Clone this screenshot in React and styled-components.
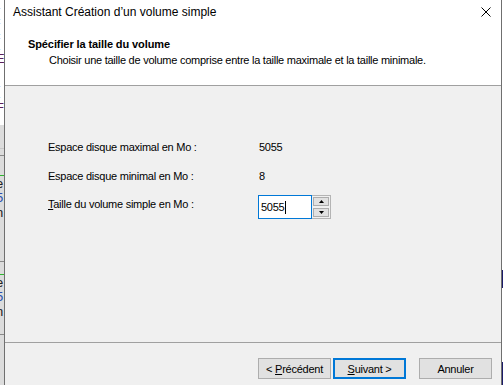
import React from "react";
import styled, { createGlobalStyle } from "styled-components";

const GlobalStyle = createGlobalStyle`
  html, body {
    margin: 0;
    padding: 0;
  }
  body {
    width: 503px;
    height: 385px;
    overflow: hidden;
    background: #ffffff;
    font-family: "Liberation Sans", Arial, sans-serif;
    font-size: 11px;
    letter-spacing: -0.25px;
    color: #000;
  }
`;

const Desktop = styled.div`
  display: flex;
  width: 503px;
  height: 385px;
`;

const BackStrip = styled.div`
  width: 4px;
  overflow: hidden;
  display: flex;
  flex-direction: column;
  background: linear-gradient(#ffffff 0 125px, #dcdcdc 125px);
`;

const BackLetter = styled.div`
  height: ${(p) => p.h}px;
  line-height: ${(p) => p.h}px;
  font-size: 13px;
  color: ${(p) => p.color || "#5a1f5a"};
  white-space: nowrap;
  margin-left: -4px;
`;

const BackRule = styled.div`
  height: 1px;
  margin-top: ${(p) => p.mt}px;
  background: ${(p) => p.color};
`;

const RightStrip = styled.div`
  width: 1px;
  background: linear-gradient(#ffffff 0 270px, #1c1c6a 270px 288px, #ffffff 288px 362px, #1c1c6a 362px);
`;

const Window = styled.div`
  flex: 1;
  display: flex;
  flex-direction: column;
  border-left: 1px solid #6f6f6f;
  border-right: 1px solid #6f6f6f;
  background: #f0f0f0;
`;

const TitleBar = styled.div`
  height: 30px;
  display: flex;
  align-items: center;
  justify-content: space-between;
  padding: 0 10px 0 8px;
  background: #ffffff;
`;

const TitleText = styled.div`
  font-size: 12px;
  letter-spacing: 0;
  margin-top: -6px;
`;

const CloseIcon = styled.svg`
  width: 10px;
  height: 10px;
  margin-top: -6px;
`;

const Header = styled.div`
  height: 56px;
  box-sizing: border-box;
  padding: 8px 0 0 23px;
  background: #ffffff;
  border-bottom: 1px solid #a0a0a0;
`;

const HeaderTitle = styled.div`
  font-weight: bold;
  letter-spacing: -0.1px;
  line-height: 13px;
`;

const HeaderSub = styled.div`
  line-height: 13px;
  margin: 3px 0 0 21px;
`;

const Body = styled.div`
  flex: 1;
  padding: 55px 0 0 43px;
`;

const Row = styled.div`
  display: flex;
  align-items: flex-start;
  margin-top: ${(p) => p.mt || 0}px;
`;

const Label = styled.div`
  width: 210px;
  line-height: 13px;
  padding-top: ${(p) => p.pt || 0}px;
`;

const Value = styled.div`
  line-height: 13px;
  padding-left: 1px;
`;

const Spin = styled.div`
  display: flex;
`;

const Field = styled.div`
  width: 50px;
  height: 22px;
  border: 1px solid #0078d7;
  background: #ffffff;
  display: flex;
  align-items: center;
  padding-left: 2px;
`;

const Caret = styled.span`
  display: inline-block;
  width: 1px;
  height: 13px;
  background: #000;
  margin-left: 1px;
`;

const SpinFrame = styled.div`
  width: 16px;
  height: 22px;
  border: 1px solid #b4b4b4;
  border-left: none;
  display: flex;
  flex-direction: column;
  justify-content: center;
  gap: 2px;
  padding: 0 1px;
`;

const SpinButton = styled.div`
  height: 7px;
  border: 1px solid #adadad;
  background: #e1e1e1;
  display: flex;
  align-items: center;
  justify-content: center;
`;

const Footer = styled.div`
  height: 43px;
  border-top: 1px solid #a0a0a0;
  display: flex;
  justify-content: flex-end;
  align-items: flex-start;
  padding: 15px 9px 0 0;
  box-sizing: border-box;
`;

const Button = styled.div`
  width: 73px;
  height: 21px;
  box-sizing: border-box;
  border: ${(p) => (p.primary ? "2px solid #0078d7" : "1px solid #adadad")};
  background: #e1e1e1;
  display: flex;
  align-items: center;
  justify-content: center;
  margin-left: ${(p) => p.ml || 0}px;
  u {
    text-decoration: underline;
  }
`;

function Arrow({ down }) {
  return (
    <svg width="5" height="3" viewBox="0 0 5 3">
      <path d={down ? "M0 0H5L2.5 3Z" : "M0 3H5L2.5 0Z"} fill="#000" />
    </svg>
  );
}

export default function App() {
  return (
    <>
      <GlobalStyle />
      <Desktop>
        <BackStrip>
          <BackLetter h={5} />
          <BackLetter h={15}>(</BackLetter>
          <BackLetter h={15}>(</BackLetter>
          <BackLetter h={15}>(</BackLetter>
          <BackLetter h={17}>E</BackLetter>
          <BackLetter h={16}>I</BackLetter>
          <BackLetter h={16}>(</BackLetter>
          <BackLetter h={18}>F</BackLetter>
          <BackRule mt={31} color="#c8c8c8" />
          <BackRule mt={6} color="#8a8a8a" />
          <BackRule mt={19} color="#2fb52f" />
          <BackLetter h={15} color="#222">e</BackLetter>
          <BackLetter h={14} color="#2b4fb0">5</BackLetter>
          <BackLetter h={16} color="#222">n</BackLetter>
          <BackRule mt={40} color="#8a8a8a" />
          <BackRule mt={12} color="#2fb52f" />
          <BackLetter h={15} color="#222">e</BackLetter>
          <BackLetter h={14} color="#2b4fb0">5</BackLetter>
          <BackLetter h={16} color="#222">n</BackLetter>
          <BackRule mt={14} color="#8a8a8a" />
        </BackStrip>
        <Window>
          <TitleBar>
            <TitleText>Assistant Création d’un volume simple</TitleText>
            <CloseIcon viewBox="0 0 10 10">
              <path d="M0.5 0.5L9.5 9.5M9.5 0.5L0.5 9.5" stroke="#000" strokeWidth="1" />
            </CloseIcon>
          </TitleBar>
          <Header>
            <HeaderTitle>Spécifier la taille du volume</HeaderTitle>
            <HeaderSub>
              Choisir une taille de volume comprise entre la taille maximale et la taille minimale.
            </HeaderSub>
          </Header>
          <Body>
            <Row>
              <Label>Espace disque maximal en Mo :</Label>
              <Value>5055</Value>
            </Row>
            <Row mt={16}>
              <Label>Espace disque minimal en Mo :</Label>
              <Value>8</Value>
            </Row>
            <Row mt={12}>
              <Label pt={3}>
                <u>T</u>aille du volume simple en Mo :
              </Label>
              <Spin>
                <Field>
                  5055
                  <Caret />
                </Field>
                <SpinFrame>
                  <SpinButton>
                    <Arrow />
                  </SpinButton>
                  <SpinButton>
                    <Arrow down />
                  </SpinButton>
                </SpinFrame>
              </Spin>
            </Row>
          </Body>
          <Footer>
            <Button>
              &lt;&nbsp;<u>P</u>récédent
            </Button>
            <Button primary ml={2}>
              <u>S</u>uivant &gt;
            </Button>
            <Button ml={13}>Annuler</Button>
          </Footer>
        </Window>
        <RightStrip />
      </Desktop>
    </>
  );
}
